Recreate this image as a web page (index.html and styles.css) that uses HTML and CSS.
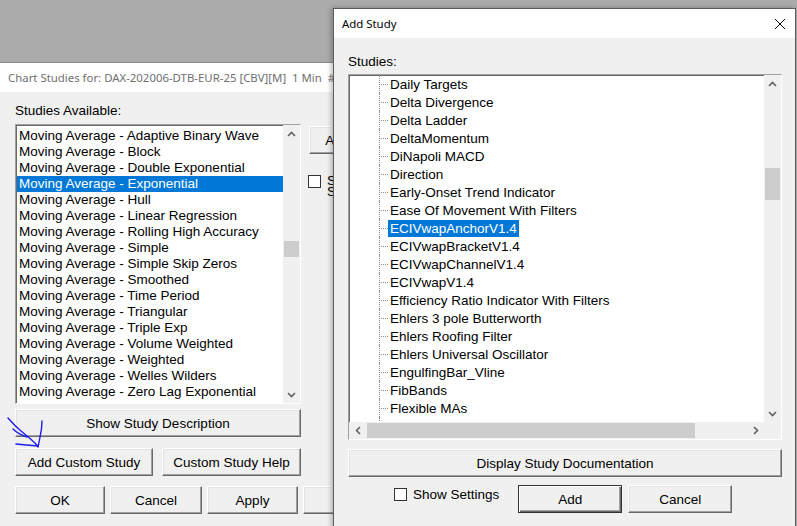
FILE: index.html
```html
<!DOCTYPE html>
<html lang="en">
<head>
  <meta charset="UTF-8">
  <title>Chart Studies</title>
  <link rel="stylesheet" href="styles.css">
</head>
<body>
  <div class="desktop">

    <!-- Chart studies dialog (inactive, behind) -->
    <div class="window studies-window">
      <div class="titlebar inactive">Chart Studies for: DAX-202006-DTB-EUR-25 [CBV][M]&nbsp; 1 Min&nbsp; #1</div>
      <div class="window-body">
        <div class="field-label">Studies Available:</div>
        <div class="columns">
          <div class="listbox">
            <ul class="list-items">
              <li>Moving Average - Adaptive Binary Wave</li>
              <li>Moving Average - Block</li>
              <li>Moving Average - Double Exponential</li>
              <li class="selected">Moving Average - Exponential</li>
              <li>Moving Average - Hull</li>
              <li>Moving Average - Linear Regression</li>
              <li>Moving Average - Rolling High Accuracy</li>
              <li>Moving Average - Simple</li>
              <li>Moving Average - Simple Skip Zeros</li>
              <li>Moving Average - Smoothed</li>
              <li>Moving Average - Time Period</li>
              <li>Moving Average - Triangular</li>
              <li>Moving Average - Triple Exp</li>
              <li>Moving Average - Volume Weighted</li>
              <li>Moving Average - Weighted</li>
              <li>Moving Average - Welles Wilders</li>
              <li>Moving Average - Zero Lag Exponential</li>
              <li>Moving Average - Sine Weighted</li>
            </ul>
            <div class="vscroll">
              <span class="arrow-btn"><svg width="9" height="6"><polyline points="1,5 4.5,1.5 8,5"/></svg></span>
              <div class="track">
                <div class="thumb left-thumb"></div>
              </div>
              <span class="arrow-btn"><svg width="9" height="6"><polyline points="1,1 4.5,4.5 8,1"/></svg></span>
            </div>
          </div>
          <div class="side">
            <button class="btn side-btn">Add &gt;&gt;</button>
            <div class="check side-check">
              <span class="box"></span>
              <span>Show Study<br>Settings on Add</span>
            </div>
          </div>
        </div>
        <button class="btn full">Show Study Description</button>
        <div class="btn-row custom-row">
          <button class="btn w138">Add Custom Study</button>
          <button class="btn w139">Custom Study Help</button>
        </div>
        <div class="btn-row footer-row">
          <button class="btn w90">OK</button>
          <button class="btn w92">Cancel</button>
          <button class="btn w91">Apply</button>
          <button class="btn w91">Help</button>
        </div>
      </div>

      <!-- pen mark pointing at the custom study button -->
      <svg class="pen-mark" width="50" height="40" viewBox="0 0 50 40">
        <path d="M7 1 Q14 9 20 14 Q29 21 37 29"/>
        <path d="M41 4 Q41 12 39 20 Q38 26 37 30"/>
        <path d="M15 27 Q25 28 37 29"/>
        <path d="M12 12 Q17 17 26 20"/>
      </svg>
    </div>

    <!-- Add study dialog (active, front) -->
    <div class="window add-window">
      <div class="titlebar">
        <span>Add Study</span>
        <svg class="close" width="12" height="12" viewBox="0 0 12 12">
          <path d="M1 1 L11 11 M11 1 L1 11"/>
        </svg>
      </div>
      <div class="window-body add-body">
        <div class="field-label">Studies:</div>
        <div class="tree-box">
          <div class="tree-main">
            <ul class="tree">
              <li><span class="guide"></span><span class="node">Daily Targets</span></li>
              <li><span class="guide"></span><span class="node">Delta Divergence</span></li>
              <li><span class="guide"></span><span class="node">Delta Ladder</span></li>
              <li><span class="guide"></span><span class="node">DeltaMomentum</span></li>
              <li><span class="guide"></span><span class="node">DiNapoli MACD</span></li>
              <li><span class="guide"></span><span class="node">Direction</span></li>
              <li><span class="guide"></span><span class="node">Early-Onset Trend Indicator</span></li>
              <li><span class="guide"></span><span class="node">Ease Of Movement With Filters</span></li>
              <li><span class="guide"></span><span class="node selected">ECIVwapAnchorV1.4</span></li>
              <li><span class="guide"></span><span class="node">ECIVwapBracketV1.4</span></li>
              <li><span class="guide"></span><span class="node">ECIVwapChannelV1.4</span></li>
              <li><span class="guide"></span><span class="node">ECIVwapV1.4</span></li>
              <li><span class="guide"></span><span class="node">Efficiency Ratio Indicator With Filters</span></li>
              <li><span class="guide"></span><span class="node">Ehlers 3 pole Butterworth</span></li>
              <li><span class="guide"></span><span class="node">Ehlers Roofing Filter</span></li>
              <li><span class="guide"></span><span class="node">Ehlers Universal Oscillator</span></li>
              <li><span class="guide"></span><span class="node">EngulfingBar_Vline</span></li>
              <li><span class="guide"></span><span class="node">FibBands</span></li>
              <li><span class="guide"></span><span class="node">Flexible MAs</span></li>
              <li><span class="guide"></span><span class="node">FRAMA</span></li>
            </ul>
            <div class="vscroll">
              <span class="arrow-btn"><svg width="9" height="6"><polyline points="1,5 4.5,1.5 8,5"/></svg></span>
              <div class="track">
                <div class="thumb tree-thumb"></div>
              </div>
              <span class="arrow-btn"><svg width="9" height="6"><polyline points="1,1 4.5,4.5 8,1"/></svg></span>
            </div>
          </div>
          <div class="hscroll">
            <span class="arrow-btn"><svg width="6" height="9"><polyline points="5,1 1.5,4.5 5,8"/></svg></span>
            <div class="htrack"><div class="hthumb"></div></div>
            <span class="arrow-btn"><svg width="6" height="9"><polyline points="1,1 4.5,4.5 1,8"/></svg></span>
            <span class="corner"></span>
          </div>
        </div>
        <button class="btn full doc-btn">Display Study Documentation</button>
        <div class="add-footer">
          <div class="check">
            <span class="box"></span>
            <span>Show Settings</span>
          </div>
          <button class="btn w104 default">Add</button>
          <button class="btn w104">Cancel</button>
        </div>
      </div>
    </div>

  </div>
</body>
</html>
```

FILE: styles.css
```css
body {
  margin: 0;
  font-family: "Liberation Sans", Arial, sans-serif;
  font-size: 13.5px;
  color: #000;
}

.desktop {
  position: relative;
  width: 797px;
  height: 526px;
  overflow: hidden;
  background-color: #ababab;
}

.window {
  position: absolute;
  background-color: #f0f0f0;
  border: 1px solid #6a6a6a;
}

.studies-window {
  left: -1px;
  top: 62px;
  width: 440px;
  height: 480px;
  border-color: #8a8a8a;
}

.add-window {
  left: 333px;
  top: 8px;
  width: 461px;
  height: 540px;
  border-color: #5c5c5c;
  box-shadow: -2px 0 5px rgba(0, 0, 0, 0.25);
}

.titlebar {
  height: 29px;
  display: flex;
  align-items: center;
  justify-content: space-between;
  padding: 0 8px;
  background-color: #fff;
  font-family: "Noto Sans", "Open Sans", sans-serif;
  font-size: 11.4px;
  color: #000;
  white-space: nowrap;
}

.titlebar.inactive {
  color: #6f6f6f;
}

.close {
  margin-right: 1px;
}

.close path {
  stroke: #000;
  stroke-width: 1;
  fill: none;
}

.window-body {
  padding: 11px 0 0 15px;
}

.field-label {
  line-height: 16px;
  height: 16px;
}

/* left dialog */

.columns {
  display: flex;
  gap: 8px;
  margin-top: 5px;
}

.listbox,
.tree-box {
  background-color: #fff;
  border: 1px solid;
  border-color: #a0a0a0 #fff #fff #a0a0a0;
  box-shadow: inset 1px 1px #696969;
}

.listbox {
  display: flex;
  width: 284px;
  height: 278px;
  overflow: hidden;
}

.list-items {
  list-style: none;
  margin: 0;
  padding: 3px 0 0 1px;
  flex: 1;
  overflow: hidden;
}

.list-items li {
  height: 16px;
  line-height: 16px;
  padding-left: 2px;
  white-space: nowrap;
}

.list-items li.selected {
  background-color: #0078d7;
  color: #fff;
}

.vscroll {
  width: 17px;
  display: flex;
  flex-direction: column;
  background-color: #f0f0f0;
}

.arrow-btn {
  height: 17px;
  display: flex;
  align-items: center;
  justify-content: center;
  flex-shrink: 0;
}

.arrow-btn polyline {
  fill: none;
  stroke: #606060;
  stroke-width: 1.6;
}

.track {
  flex: 1;
  display: flex;
  flex-direction: column;
}

.thumb {
  width: 15px;
  margin-left: 1px;
  background-color: #cdcdcd;
}

.left-thumb {
  height: 16px;
  margin-top: 99px;
}

.side {
  display: flex;
  flex-direction: column;
  gap: 21px;
  padding-top: 2px;
}

.side-btn {
  width: 76px;
}

.check {
  display: flex;
  align-items: flex-start;
  gap: 6px;
  line-height: 12px;
  white-space: nowrap;
}

.box {
  width: 11px;
  height: 11px;
  border: 1px solid #333;
  background-color: #fff;
  flex-shrink: 0;
}

.side-check {
  margin-left: -1px;
  line-height: 11px;
}

.btn {
  font: inherit;
  color: #000;
  height: 28px;
  padding: 0;
  background-color: #f0f0f0;
  border: 1px solid;
  border-color: #fff #696969 #696969 #fff;
  box-shadow: inset -1px -1px #a0a0a0, inset 1px 1px #e3e3e3;
  white-space: nowrap;
}

.btn.full {
  display: block;
  width: 286px;
  margin-top: 5px;
}

.btn-row {
  display: flex;
}

.custom-row {
  gap: 9px;
  margin-top: 11px;
}

.footer-row {
  gap: 5px;
  margin-top: 10px;
}

.w90 { width: 90px; }
.w91 { width: 91px; }
.w92 { width: 92px; }
.w104 { width: 104px; }
.w138 { width: 138px; }
.w139 { width: 139px; }

.pen-mark {
  position: absolute;
  left: 1px;
  top: 354px;
}

.pen-mark path {
  fill: none;
  stroke: #1c1cf0;
  stroke-width: 1.4;
  stroke-linecap: round;
}

/* add study dialog */

.add-body {
  padding: 16px 0 0 14px;
}

.tree-box {
  width: 432px;
  height: 364px;
  margin-top: 4px;
  display: flex;
  flex-direction: column;
  overflow: hidden;
}

.tree-main {
  flex: 1;
  display: flex;
  min-height: 0;
}

.tree {
  list-style: none;
  margin: 0;
  padding: 0 0 0 30px;
  flex: 1;
  overflow: hidden;
}

.tree li {
  height: 18px;
  display: flex;
  align-items: center;
  white-space: nowrap;
}

.guide {
  width: 8px;
  height: 18px;
  border-left: 1px dotted #8c8c8c;
  background-image: linear-gradient(to right, #8c8c8c 50%, transparent 50%);
  background-size: 2px 1px;
  background-repeat: repeat-x;
  background-position: 1px 9px;
}

.node {
  height: 17px;
  line-height: 17px;
  padding: 0 2px 0 2px;
}

.node.selected {
  background-color: #0078d7;
  color: #fff;
}

.tree-thumb {
  height: 32px;
  margin-top: 76px;
}

.hscroll {
  height: 17px;
  display: flex;
  background-color: #f0f0f0;
}

.hscroll .arrow-btn {
  width: 17px;
}

.htrack {
  flex: 1;
  display: flex;
  align-items: center;
}

.hthumb {
  width: 328px;
  height: 15px;
  margin-left: 1px;
  background-color: #cdcdcd;
}

.corner {
  width: 17px;
}

.doc-btn.full {
  width: 434px;
  margin-top: 9px;
}

.add-footer {
  display: flex;
  align-items: flex-start;
  margin-top: 8px;
  padding-left: 46px;
}

.add-footer .check {
  margin-top: 3px;
  line-height: 14px;
  margin-right: 19px;
}

.add-footer .btn + .btn {
  margin-left: 6px;
}

.btn.default {
  border-color: #333;
  box-shadow: inset 1px 1px #fff, inset -1px -1px #696969, inset -2px -2px #a0a0a0;
}
```
